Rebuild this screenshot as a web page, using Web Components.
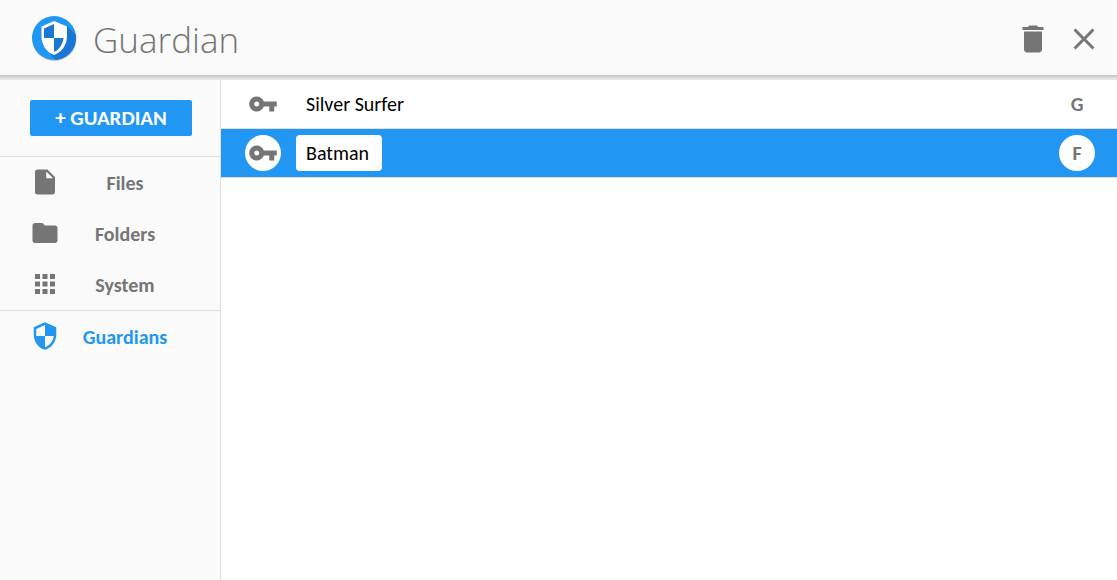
<!DOCTYPE html>
<html lang="en">
<head>
<meta charset="utf-8">
<title>Guardian</title>
<style>
  html, body { height: 100%; }
  body {
    margin: 0;
    background: #fff;
    color: #757575;
    font: 20px/24px Carlito, Calibri, Lato, sans-serif;
    --accent: #2196f3;
    --panel: #fafafa;
    --line: #e0e0e0;
  }
</style>
</head>
<body>
<guardian-app>
  <app-header slot="header" heading="Guardian">
    <icon-button icon="delete" label="Delete"></icon-button>
    <icon-button icon="close" label="Close"></icon-button>
  </app-header>
  <side-nav slot="nav">
    <add-button slot="action">+ GUARDIAN</add-button>
    <nav-item icon="file">Files</nav-item>
    <nav-item icon="folder">Folders</nav-item>
    <nav-item icon="apps">System</nav-item>
    <nav-item slot="footer" icon="security" active>Guardians</nav-item>
  </side-nav>
  <guardian-row kind="G">Silver Surfer</guardian-row>
  <guardian-row kind="F" selected>Batman</guardian-row>
</guardian-app>

<script>
const ICONS = {
  delete: 'M6 19c0 1.1.9 2 2 2h8c1.1 0 2-.9 2-2V7H6v12zM19 4h-3.5l-1-1h-5l-1 1H5v2h14V4z',
  close: 'M19 6.41L17.59 5 12 10.59 6.41 5 5 6.41 10.59 12 5 17.59 6.41 19 12 13.41 17.59 19 19 17.59 13.41 12z',
  file: 'M6 2c-1.1 0-1.99.9-1.99 2L4 20c0 1.1.89 2 1.99 2H18c1.1 0 2-.9 2-2V8l-6-6H6zm7 7V3.5L18.5 9H13z',
  folder: 'M10 4H4c-1.1 0-1.99.9-1.99 2L2 18c0 1.1.9 2 2 2h16c1.1 0 2-.9 2-2V8c0-1.1-.9-2-2-2h-8l-2-2z',
  apps: 'M4 8h4V4H4v4zm6 12h4v-4h-4v4zm-6 0h4v-4H4v4zm0-6h4v-4H4v4zm6 0h4v-4h-4v4zm6-10v4h4V4h-4zm-6 4h4V4h-4v4zm6 6h4v-4h-4v4zm0 6h4v-4h-4v4z',
  security: 'M12 1L3 5v6c0 5.55 3.84 10.74 9 12 5.16-1.26 9-6.45 9-12V5l-9-4zm0 10.99h7c-.53 4.12-3.28 7.79-7 8.94V12H5V6.3l7-3.11v8.8z',
  key: 'M12.65 10C11.83 7.67 9.61 6 7 6c-3.31 0-6 2.69-6 6s2.69 6 6 6c2.61 0 4.83-1.67 5.65-4H17v4h4v-4h2v-4H12.65zM7 14c-1.1 0-2-.9-2-2s.9-2 2-2 2 .9 2 2-.9 2-2 2z'
};
const icon = (name, size) =>
  `<svg width="${size}" height="${size}" viewBox="0 0 24 24" fill="currentColor" aria-hidden="true"><path d="${ICONS[name]}"/></svg>`;

class Base extends HTMLElement {
  constructor() {
    super();
    this.attachShadow({ mode: 'open' });
  }
  connectedCallback() {
    this.shadowRoot.innerHTML = `<style>*{box-sizing:border-box}svg{display:block}</style>` + this.render();
  }
}

customElements.define('guardian-app', class extends Base {
  render() {
    return `<style>
      :host { display: flex; flex-direction: column; min-height: 100%; }
      .body { flex: 1; display: flex; }
      main { flex: 1; min-width: 0; background: #fff; }
    </style>
    <slot name="header"></slot>
    <div class="body"><slot name="nav"></slot><main><slot></slot></main></div>`;
  }
});

customElements.define('app-header', class extends Base {
  render() {
    return `<style>
      :host { display: block; }
      header { display: flex; align-items: center; height: 75px; padding: 0 15px 0 30px; background: var(--panel); }
      .edge { height: 5px; background: linear-gradient(#c4c4c4, #ececec); }
      h1 { flex: 1; margin: 4px 0 0 15px; font: 300 35px/48px "Open Sans", "Noto Sans", sans-serif; }
      .actions { display: flex; gap: 15px; margin-top: 3px; }
    </style>
    <header>
      <svg width="48" height="48" viewBox="0 0 48 48" role="img" aria-label="Guardian logo">
        <defs>
          <clipPath id="disc"><circle cx="24" cy="24" r="22"/></clipPath>
          <linearGradient id="shade" x1="0" y1="0" x2="1" y2="1">
            <stop offset=".4" stop-color="#1976d2"/><stop offset="1" stop-color="#1c80dc"/>
          </linearGradient>
        </defs>
        <circle cx="24.5" cy="25" r="22" fill="#000" opacity=".22"/>
        <circle cx="24" cy="24" r="22" fill="#2196f3"/>
        <g clip-path="url(#disc)">
          <path d="M37 12L60 35V60H38L15 34z" fill="url(#shade)"/>
        </g>
        <path d="M24 7L11.500 12.500V22C11.500 31 16.500 38.500 24 41C31.500 38.500 37 31 37 22V12.500z" fill="#fff"/>
        <path d="M24 10L14 14.500V24H24zM24 24H33.500C32.600 30.500 29 36 24 38z" fill="#1976d2"/>
      </svg>
      <h1>${this.getAttribute('heading')}</h1>
      <div class="actions"><slot></slot></div>
    </header>
    <div class="edge"></div>`;
  }
});

customElements.define('icon-button', class extends Base {
  render() {
    return `<style>
      :host { display: block; }
      button { display: block; margin: 0; padding: 0; border: 0; background: none; color: #757575; cursor: pointer; }
    </style>
    <button type="button" aria-label="${this.getAttribute('label')}">${icon(this.getAttribute('icon'), 36)}</button>`;
  }
});

customElements.define('side-nav', class extends Base {
  render() {
    return `<style>
      :host { display: block; flex: none; width: 221px; box-sizing: border-box; background: var(--panel); border-right: 1px solid var(--line); }
      .action { padding: 20px 28px 20px 30px; }
      .group { border-top: 1px solid var(--line); }
    </style>
    <div class="action"><slot name="action"></slot></div>
    <nav>
      <div class="group"><slot></slot></div>
      <div class="group"><slot name="footer"></slot></div>
    </nav>`;
  }
});

customElements.define('add-button', class extends Base {
  render() {
    return `<style>
      :host { display: block; }
      button { display: block; width: 100%; height: 36px; padding: 0; border: 0; border-radius: 2px;
        background: var(--accent); color: #fff; font: inherit; font-size: 21px; font-weight: 700; cursor: pointer; }
    </style>
    <button type="button"><slot></slot></button>`;
  }
});

customElements.define('nav-item', class extends Base {
  render() {
    return `<style>
      :host { display: block; }
      :host([active]) { color: var(--accent); }
      a { display: flex; align-items: center; height: 51px; padding: 0 30px 1px; color: inherit; text-decoration: none; font-weight: 700; }
      span { flex: 1; padding-top: 2px; text-align: center; }
    </style>
    <a href="#">${icon(this.getAttribute('icon'), 30)}<span><slot></slot></span></a>`;
  }
});

customElements.define('guardian-row', class extends Base {
  render() {
    return `<style>
      :host { display: flex; align-items: center; height: 49px; box-sizing: border-box; padding: 0 22px 0 24px; border-bottom: 1px solid var(--line); }
      .round { display: grid; place-items: center; width: 36px; height: 36px; border-radius: 50%; }
      .name { margin-left: 15px; padding: 6px 13px 6px 10px; border-radius: 4px; color: #000; }
      .kind { margin-left: auto; font-weight: 700; }
      :host([selected]) { background: var(--accent); }
      :host([selected]) :is(.round, .name) { background: #fff; }
    </style>
    <div class="round">${icon('key', 30)}</div>
    <div class="name"><slot></slot></div>
    <div class="round kind">${this.getAttribute('kind')}</div>`;
  }
});
</script>
</body>
</html>
